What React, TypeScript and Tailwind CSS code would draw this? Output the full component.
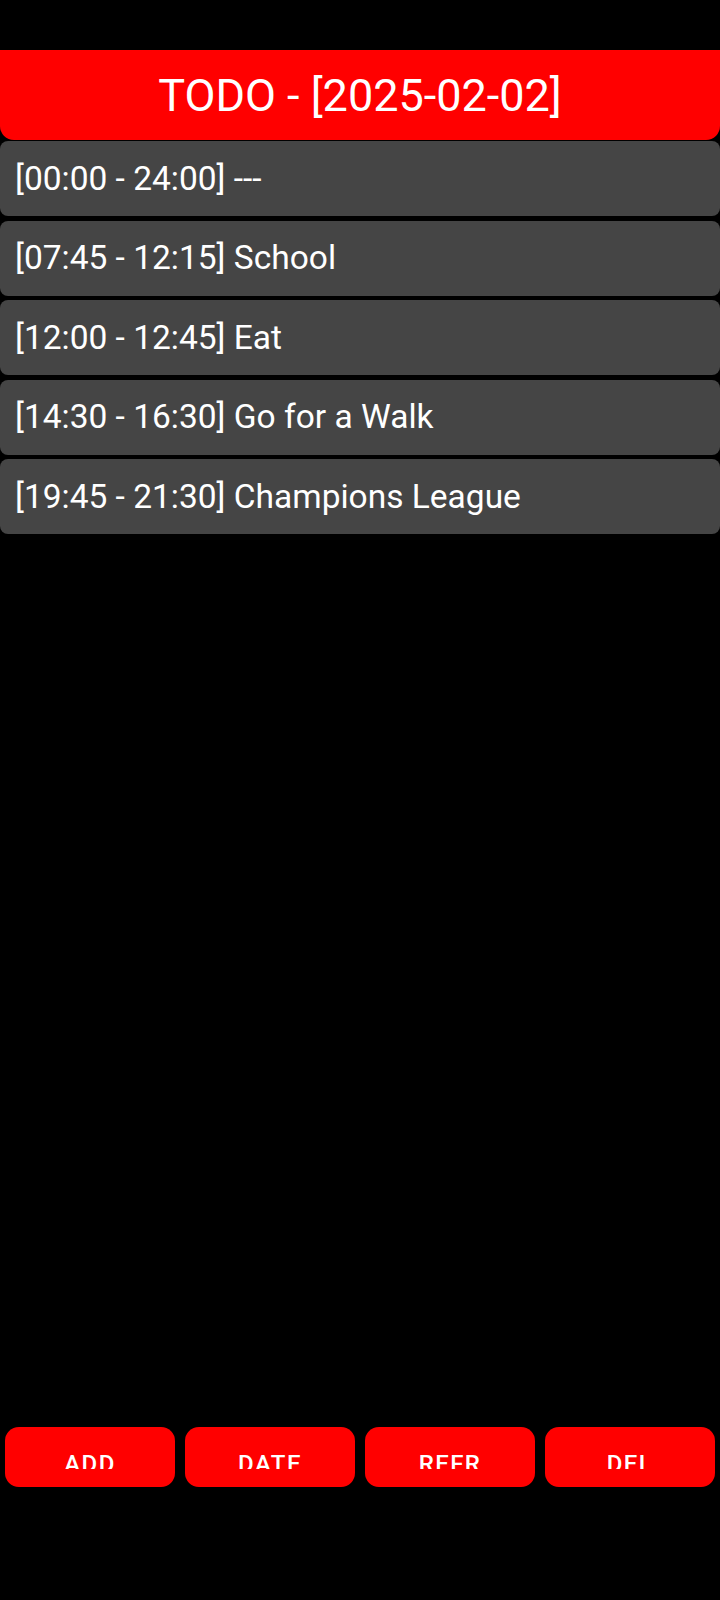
import React from 'react';

const App: React.FC = () => {
  const items = [
    "[00:00 - 24:00] ---",
    "[07:45 - 12:15] School",
    "[12:00 - 12:45] Eat",
    "[14:30 - 16:30] Go for a Walk",
    "[19:45 - 21:30] Champions League",
  ];
  const buttons = ["ADD", "DATE", "REFR", "DEL"];

  return (
    <div className="h-[1600px] w-[720px] bg-black flex flex-col text-white font-['Roboto',sans-serif]">
      <div className="mt-[50px] h-[90px] bg-[#ff0000] rounded-b-[14px] flex items-center justify-center">
        <span className="text-[45px] leading-none">TODO - [2025-02-02]</span>
      </div>

      <div className="mt-[1px] flex flex-col gap-[4.5px]">
        {items.map((item, idx) => (
          <div key={idx} className="h-[75px] bg-[#454545] rounded-[8px] flex items-center px-[15px]">
            <span className="text-[33.5px] leading-none">{item}</span>
          </div>
        ))}
      </div>

      {/* labels are cut off at the bottom, same as the device */}
      <div className="mt-auto mb-[113px] px-[5px] grid grid-cols-4 gap-[10px]">
        {buttons.map(label => (
          <div key={label} className="h-[60px] bg-[#ff0000] rounded-[14px] flex justify-center pt-[25px]">
            <div className="h-[17px] overflow-hidden">
              <span className="block text-[24px] leading-none font-medium tracking-[0.06em]">{label}</span>
            </div>
          </div>
        ))}
      </div>
    </div>
  );
};

export default App;
